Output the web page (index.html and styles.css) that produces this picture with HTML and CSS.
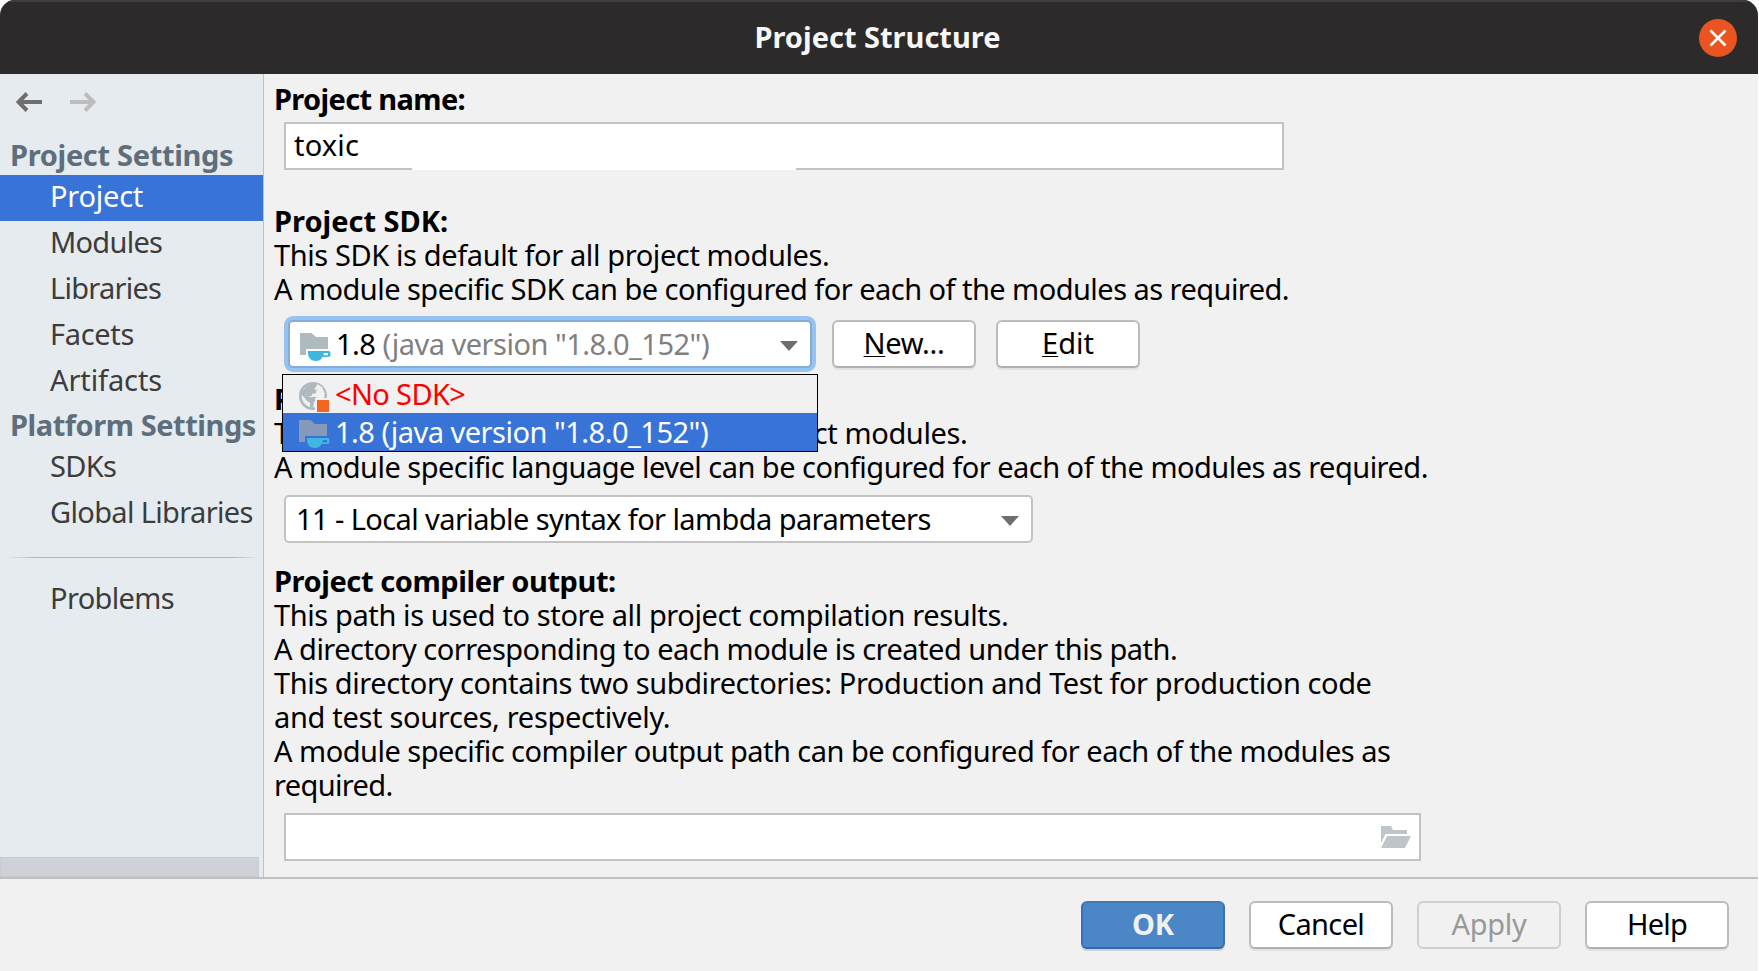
FILE: index.html
```html
<!DOCTYPE html>
<html lang="en">
<head>
<meta charset="utf-8">
<title>Project Structure</title>
<link rel="stylesheet" href="styles.css">
</head>
<body>
<svg class="defs" width="0" height="0" aria-hidden="true">
  <symbol id="jdk" viewBox="0 0 32 30">
    <path class="folder" d="M0 0h11.500l4.500 4H28v12H6v6H0z"/>
    <path class="cup" d="M8 18h20.500a2 2 0 0 1 2 2v2a2 2 0 0 1-2 2H22.500c-1.500 3-4 4-6.500 4C11 28 8 24.500 8 20zM23.700 20v2.200H28V20z" fill-rule="evenodd"/>
  </symbol>
</svg>
<div class="window">
  <header class="titlebar">
    <h1 class="title">Project Structure</h1>
    <button class="close" aria-label="Close"><svg width="38" height="38" viewBox="0 0 38 38"><circle cx="19" cy="19" r="19" fill="#e95420"/><path d="M11.500 11.500l15 15m0-15l-15 15" stroke="#fff" stroke-width="2.600"/></svg></button>
  </header>
  <div class="body">
    <nav class="sidebar">
      <div class="history">
        <svg width="26" height="20" viewBox="0 0 26 20"><path d="M26 10H3M11 1.500L2.500 10l8.500 8.500" fill="none" stroke="#6e6e6e" stroke-width="4"/></svg>
        <svg width="26" height="20" viewBox="0 0 26 20"><path d="M0 10h23M15 1.500l8.500 8.500-8.500 8.500" fill="none" stroke="#bdbdbd" stroke-width="4"/></svg>
      </div>
      <h2 class="group snug">Project Settings</h2>
      <a class="item selected easy">Project</a>
      <a class="item tight">Modules</a>
      <a class="item tight">Libraries</a>
      <a class="item snug">Facets</a>
      <a class="item loose">Artifacts</a>
      <h2 class="group platform">Platform Settings</h2>
      <a class="item firm">SDKs</a>
      <a class="item firm">Global Libraries</a>
      <div class="divider"></div>
      <a class="item firm">Problems</a>
      <div class="scroll-thumb"></div>
    </nav>
    <main class="content">
      <section class="name">
        <h3 class="line firm">Project name:</h3>
        <div class="input name-input"><span class="wide">toxic</span></div>
      </section>
      <section class="sdk">
        <h3 class="line">Project SDK:</h3>
        <p class="line s39">This SDK is default for all project modules.</p>
        <p class="line s54">A module specific SDK can be configured for each of the modules as required.</p>
        <div class="sdk-row">
          <div class="combo focused">
            <svg class="jdk" width="32" height="30"><use href="#jdk"/></svg>
            <span class="s51">1.8 <span class="muted">(java version "1.8.0_152")</span></span>
            <svg class="caret" width="18" height="10" viewBox="0 0 18 10"><path d="M0 0h18L9 10z" fill="#6e6e6e"/></svg>
            <div class="popup">
              <div class="option none">
                <svg width="32" height="30" viewBox="0 0 32 30">
                  <circle cx="14" cy="14" r="12.700" fill="none" stroke="#aeb9c0" stroke-width="2.600"/>
                  <path d="M7 5l6-4h5l-1 4-2 2 3 1-1 3-4 1v2h-3l1 1h6l1 3-3 2-1 6-3-1v-4l-4-3-2-3-4-3z" fill="#aeb9c0"/>
                  <path d="M18 2l5 3 3 7-2 1-2-2-3 1-2-3 2-2z" fill="#f1f1f1"/>
                  <path d="M16 16h16v14H16z" fill="#f1f1f1"/>
                  <path d="M18 18h12v12H18z" fill="#f26522"/>
                </svg>
                <span class="firm">&lt;No SDK&gt;</span>
              </div>
              <div class="option active">
                <svg class="jdk" width="32" height="30"><use href="#jdk"/></svg>
                <span class="s51">1.8 (java version "1.8.0_152")</span>
              </div>
            </div>
          </div>
          <button class="button"><span class="snug"><u>N</u>ew...</span></button>
          <button class="button"><span><u>E</u>dit</span></button>
        </div>
      </section>
      <section class="level">
        <h3 class="line">Project language level:</h3>
        <p class="line s39">This language level is default for all project modules.</p>
        <p class="line s51">A module specific language level can be configured for each of the modules as required.</p>
        <div class="combo level-combo">
          <span class="local">11 - Local variable syntax for lambda parameters</span>
          <svg class="caret" width="18" height="10" viewBox="0 0 18 10"><path d="M0 0h18L9 10z" fill="#6e6e6e"/></svg>
        </div>
      </section>
      <section class="output">
        <h3 class="line s42">Project compiler output:</h3>
        <p class="line s39">This path is used to store all project compilation results.</p>
        <p class="line s51">A directory corresponding to each module is created under this path.</p>
        <p class="line s42">This directory contains two subdirectories: Production and Test for production code</p>
        <p class="line snug">and test sources, respectively.</p>
        <p class="line s51">A module specific compiler output path can be configured for each of the modules as</p>
        <p class="line firm">required.</p>
        <div class="input path-input">
          <svg width="30" height="22" viewBox="0 0 30 22"><path d="M0 0h10l2 4h14v4H4.500L0 17zM6 10h24l-6 12H0z" fill="#c0c5c9"/></svg>
        </div>
      </section>
    </main>
  </div>
  <footer class="footer">
    <button class="button big primary">OK</button>
    <button class="button big"><span class="firm">Cancel</span></button>
    <button class="button big disabled"><span class="snug">Apply</span></button>
    <button class="button big"><span class="tight">Help</span></button>
  </footer>
</div>
</body>
</html>
```
FILE: styles.css
```css
* { box-sizing: border-box; }
body {
  margin: 0;
  background: #fff;
  font: 29px/34px "Noto Sans", "Open Sans", sans-serif;
  color: #000;
}
h1, h2, h3, p { margin: 0; font-size: inherit; }
.defs { display: block; position: absolute; }
.folder { fill: var(--folder, #afb9c0); }
.cup { fill: #40b6e0; }

/* Letter spacing steps */
.loose { letter-spacing: -.1px; }
.easy { letter-spacing: -.24px; }
.snug { letter-spacing: -.32px; }
.s39 { letter-spacing: -.39px; }
.s42 { letter-spacing: -.42px; }
.s51 { letter-spacing: -.51px; }
.s54 { letter-spacing: -.54px; }
.local { letter-spacing: -.59px; }
.firm { letter-spacing: -.65px; }
.tight { letter-spacing: -.74px; }
.wide { letter-spacing: .16px; }

.window {
  width: 1758px;
  height: 971px;
  display: flex;
  flex-direction: column;
  background: #f1f1f1;
  border-radius: 15px 15px 0 0;
  overflow: hidden;
}
.titlebar {
  height: 74px;
  flex: none;
  display: grid;
  grid-template-columns: 1fr auto 1fr;
  align-items: center;
  background: #2c2a2b;
  box-shadow: inset 0 2px #3e3c3d;
  color: #f7f7f7;
}
.title { grid-column: 2; line-height: 74px; padding-right: 3px; }
.close {
  justify-self: end;
  margin-right: 21px;
  margin-top: 2px;
  width: 38px;
  height: 38px;
  padding: 0;
  border: 0;
  background: none;
}
.close svg { display: block; }
.body { height: 803px; display: flex; flex: none; }

.sidebar {
  width: 264px;
  flex: none;
  display: flex;
  flex-direction: column;
  background: #e5ebef;
  border-right: 1px solid #bfc1c3;
  white-space: nowrap;
}
.history { display: flex; gap: 28px; padding: 18px 16px 0; height: 61px; }
.group {
  height: 40px;
  padding-left: 10px;
  line-height: 40px;
  color: #5f6e7b;
}
.platform { letter-spacing: -.45px; }
.item {
  display: block;
  height: 46px;
  padding-left: 50px;
  line-height: 42px;
  color: #3c3c3c;
}
.selected { background: #3874d8; color: #fff; }
.divider {
  height: 1px;
  margin: 20px 2px 19px 6px;
  background: linear-gradient(90deg, transparent, #b0b4b7 12%, #b0b4b7 88%, transparent);
}
.scroll-thumb {
  width: 259px;
  height: 20px;
  margin-top: auto;
  background: #ced2d8;
  border: 1px solid #c8ccd1;
}

.content { flex: 1; padding: 8px 0 0 10px; white-space: nowrap; }
.line { height: 34px; }
.input {
  display: flex;
  align-items: center;
  height: 48px;
  margin-left: 10px;
  border: 2px solid #c3c3c3;
  background: #fff;
}
.name-input {
  position: relative;
  width: 1000px;
  margin-top: 6px;
  padding: 0 8px 3px;
}
.name-input::after {
  content: "";
  position: absolute;
  left: 126px;
  bottom: -2px;
  width: 384px;
  height: 2px;
  background: #fff;
}
.sdk { margin-top: 34px; }
.sdk-row { display: flex; margin: 14px 0 0 14px; }
.combo {
  display: flex;
  align-items: center;
  height: 48px;
  border: 2px solid #c3c3c3;
  border-radius: 5px;
  background: #fff;
}
.caret { margin: 3px 0 0 auto; }
.focused {
  position: relative;
  width: 524px;
  padding: 0 12px 0 10px;
  border-color: #86abd6;
  box-shadow: 0 0 0 4px #97c3f3;
}
.jdk, .option svg { flex: none; margin-right: 4px; }
.focused > .jdk { margin-top: 7px; }
.muted { color: #808080; }
.popup {
  position: absolute;
  z-index: 2;
  left: -8px;
  top: 52px;
  width: 536px;
  border: 1px solid #000;
  background: #f1f1f1;
}
.option {
  display: flex;
  align-items: center;
  height: 38px;
  padding-left: 16px;
  line-height: 38px;
}
.option svg { margin-top: 5px; }
.none { color: #f00; }
.active { --folder: #8799b8; background: #3874d8; color: #fff; }
.active .jdk { margin-top: 6px; }
.button {
  width: 144px;
  height: 48px;
  padding: 0 0 2px;
  border: 2px solid #bcbcbc;
  border-bottom-color: #b0b0b0;
  border-radius: 6px;
  background: #fff;
  box-shadow: 0 2px #e2e2e2;
  font: inherit;
  color: #000;
}
.button u { text-decoration-thickness: 1px; text-underline-offset: 2px; text-decoration-skip-ink: none; }
.sdk-row .button { margin-left: 20px; }

.level { margin-top: 14px; }
.level-combo { width: 749px; margin: 11px 0 0 10px; padding: 0 12px 0 10px; }
.output { margin-top: 21px; }
.path-input { width: 1137px; margin-top: 11px; padding-right: 8px; justify-content: flex-end; }

.footer {
  height: 94px;
  display: flex;
  justify-content: flex-end;
  gap: 24px;
  padding: 22px 29px 0 0;
  border-top: 2px solid #c1c1c1;
}
.primary {
  border-color: #4279bb #3a70b4 #3468ac;
  background: #4b87c7;
  color: #f1f1f1;
  font-weight: bold;
  box-shadow: 0 2px #cfcfcf;
}
.disabled {
  border-color: #cfcfcf;
  background: #f1f1f1;
  color: #999;
  box-shadow: none;
}
```
